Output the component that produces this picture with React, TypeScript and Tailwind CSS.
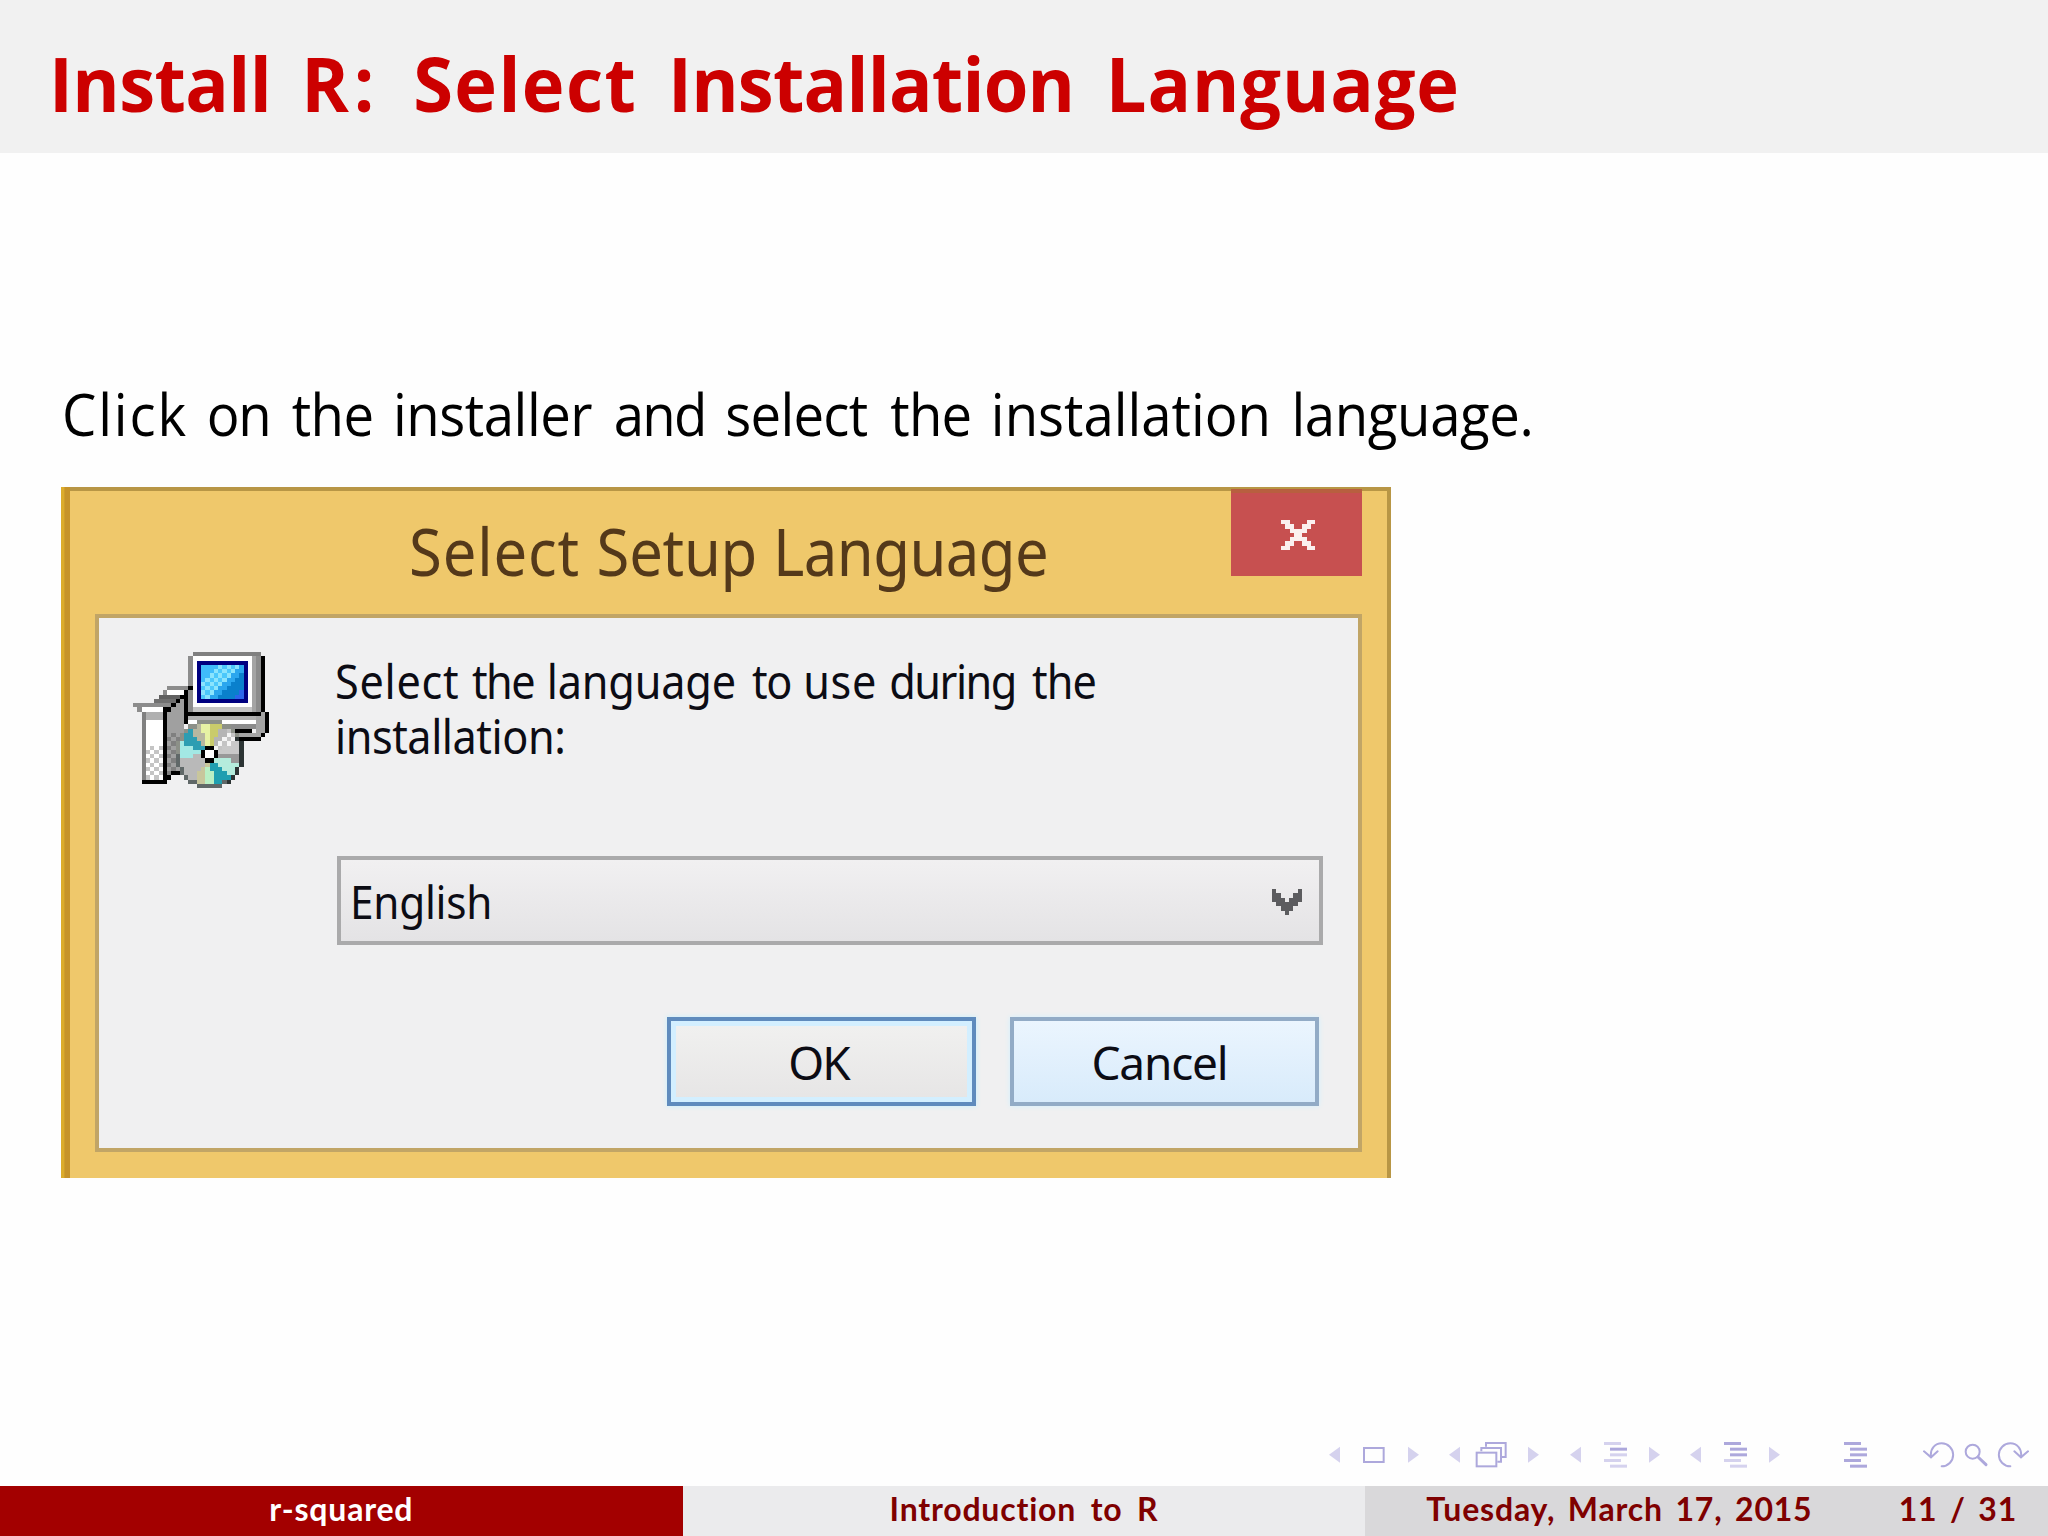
import type { ReactNode } from "react";

type Pixel = { x: number; y: number; w?: number; h?: number; fill: string };

const CD_CENTER = { x: 18, y: 24 };

// Colour of a disc cell, picked by the sector it falls in (clockwise from the top)
const discColor = (dx: number, dy: number) => {
  const angle = ((Math.atan2(dx, -dy) * 180) / Math.PI + 360) % 360;
  if (angle < 22) return "#c9cb6b";
  if (angle < 38) return "#b5b5b5";
  if (angle < 62) return (Math.floor(dx) + Math.floor(dy)) % 2 ? "#f4f4f4" : "#c4c4c4";
  if (angle < 88) return "#c8c8c8";
  if (angle < 108) return "#989898";
  if (angle < 140) return "#b4ecdc";
  if (angle < 172) return "#1f9fb0";
  if (angle < 190) return "#b9efc4";
  if (angle < 210) return "#c8c69c";
  if (angle < 262) return "#b9b9b9";
  if (angle < 292) return "#a3e8e4";
  if (angle < 322) return "#2d9db2";
  if (angle < 342) return "#b7b7a0";
  return "#e6f2a4";
};

const buildDisc = () => {
  const cells: Pixel[] = [];
  for (let y = 16; y < 32; y++) {
    for (let x = 10; x < 26; x++) {
      const dx = x + 0.5 - CD_CENTER.x;
      const dy = y + 0.5 - CD_CENTER.y;
      const dist = Math.hypot(dx, dy);
      if (dist > 8.05) continue;
      const onEdge = dist > 7.2;
      let fill = discColor(dx, dy);
      if (onEdge) fill = dx > 4 && dy > -4 ? "#2c3434" : dy > 0 ? "#606868" : "#8c9088";
      cells.push({ x, y, fill });
    }
  }
  return cells;
};

const buildScreen = () => {
  const cells: Pixel[] = [];
  for (let y = 0; y < 8; y++) {
    for (let x = 0; x < 10; x++) {
      const s = x + y;
      let fill = "#40bcfb";
      if (s > 8) fill = "#2ba6ee";
      if (s > 10) fill = "#0a80cc";
      if (s > 14) fill = "#2c66ea";
      // dithered highlight along the diagonal
      if (s > 3 && s < 9 && x % 2 === y % 2) fill = "#8be4fd";
      if (s > 3 && s < 9 && x % 2 !== y % 2) fill = "#4cc8fb";
      cells.push({ x: x + 16, y: y + 3, fill });
    }
  }
  return cells;
};

const buildBoxPattern = () => {
  const cells: Pixel[] = [];
  for (let y = 22; y < 30; y++) {
    for (let x = 3; x < 7; x++) {
      if ((x + y) % 2 === 0) cells.push({ x, y, fill: "#c4c4c4" });
    }
  }
  for (let y = 19; y < 28; y++) {
    for (let x = 8; x < 11; x++) {
      if ((x + y) % 2 === 0) cells.push({ x, y, fill: "#808080" });
    }
  }
  return cells;
};

const INSTALLER_PIXELS: Pixel[] = [
  // monitor
  { x: 14, y: 0, w: 16, fill: "#808080" },
  { x: 13, y: 1, h: 13, fill: "#8c8c8c" },
  { x: 14, y: 1, w: 14, h: 12, fill: "#ffffff" },
  { x: 28, y: 1, w: 2, h: 13, fill: "#a4a4a4" },
  { x: 29, y: 1, h: 13, fill: "#8c8c8c" },
  { x: 14, y: 13, w: 14, fill: "#c4c4c4" },
  { x: 30, y: 1, h: 13, fill: "#000000" },
  { x: 15, y: 2, w: 12, h: 10, fill: "#000080" },
  ...buildScreen(),
  // monitor foot
  { x: 13, y: 14, w: 17, fill: "#000000" },
  { x: 13, y: 15, w: 16, fill: "#b0b0b0" },
  { x: 13, y: 16, w: 17, fill: "#ffffff" },
  { x: 21, y: 17, w: 9, fill: "#8c8c8c" },
  { x: 29, y: 15, w: 2, h: 5, fill: "#a4a4a4" },
  { x: 30, y: 14, fill: "#a4a4a4" },
  { x: 31, y: 14, h: 5, fill: "#000000" },
  { x: 24, y: 19, w: 6, fill: "#a4a4a4" },
  { x: 23, y: 18, w: 5, fill: "#000000" },
  { x: 30, y: 19, fill: "#000000" },
  { x: 25, y: 20, w: 5, fill: "#000000" },
  // box lid
  { x: 8, y: 8, w: 5, fill: "#8c8c8c" },
  { x: 13, y: 8, fill: "#000000" },
  { x: 7, y: 9, fill: "#8c8c8c" },
  { x: 8, y: 9, w: 4, fill: "#ffffff" },
  { x: 6, y: 10, w: 5, fill: "#606060" },
  { x: 5, y: 11, w: 5, fill: "#707070" },
  { x: 0, y: 12, w: 9, fill: "#8c8c8c" },
  { x: 1, y: 13, w: 1, fill: "#8c8c8c" },
  { x: 2, y: 13, w: 5, fill: "#ffffff" },
  // box body
  { x: 8, y: 13, w: 4, h: 15, fill: "#a0a0a0" },
  { x: 9, y: 12, w: 3, fill: "#a0a0a0" },
  { x: 10, y: 11, w: 2, fill: "#a0a0a0" },
  { x: 2, y: 14, h: 16, fill: "#808080" },
  { x: 3, y: 14, w: 4, h: 2, fill: "#b0b0b0" },
  { x: 3, y: 16, w: 4, h: 14, fill: "#ffffff" },
  { x: 7, y: 13, h: 18, fill: "#000000" },
  { x: 8, y: 13, fill: "#000000" },
  { x: 9, y: 12, fill: "#000000" },
  { x: 10, y: 11, fill: "#000000" },
  { x: 11, y: 10, fill: "#000000" },
  { x: 12, y: 9, h: 8, fill: "#000000" },
  { x: 2, y: 30, w: 6, fill: "#000000" },
  { x: 8, y: 28, fill: "#808080" },
  { x: 8, y: 29, fill: "#000000" },
  { x: 9, y: 28, w: 2, fill: "#000000" },
  ...buildBoxPattern(),
  ...buildDisc(),
  // disc hub
  { x: 17, y: 22, w: 2, h: 4, fill: "#000000" },
  { x: 16, y: 23, w: 4, h: 2, fill: "#000000" },
  { x: 17, y: 23, w: 2, h: 2, fill: "#ffffff" },
];

const InstallerIcon = () => (
  <svg viewBox="0 0 32 32" shapeRendering="crispEdges" className="h-[136px] w-[136px] shrink-0">
    {INSTALLER_PIXELS.map(({ x, y, w = 1, h = 1, fill }, i) => (
      <rect key={i} x={x} y={y} width={w} height={h} fill={fill} />
    ))}
  </svg>
);

const CloseGlyph = () => (
  <svg
    viewBox="0 0 8 7"
    preserveAspectRatio="none"
    shapeRendering="crispEdges"
    className="h-[30px] w-[34px]"
    fill="#fbf1f0"
  >
    <path d="M0 0h2v1H0zM6 0h2v1H6zM1 1h2v1H1zM5 1h2v1H5zM2 2h4v1H2zM3 3h2v1H3zM2 4h4v1H2zM1 5h2v1H1zM5 5h2v1H5zM0 6h2v1H0zM6 6h2v1H6z" />
  </svg>
);

const ChevronGlyph = () => (
  <svg viewBox="0 0 7 6" shapeRendering="crispEdges" className="mt-0.5 h-[26px] w-[30px]" fill="#5c5c5f">
    <path d="M0 0h1v1h1v1h1v1h1v-1h1v-1h1v-1h1v3h-1v1h-1v1h-1v1h-1v-1h-1v-1h-1v-1h-1z" />
  </svg>
);

const SetupDialog = () => (
  <div className="flex h-[691px] w-[1330px] bg-[#efc86b]">
    <div className="w-[9px] shrink-0 bg-linear-to-r from-[#dcac2c] from-30% to-[#c6932a] to-45%" />
    <div className="flex flex-1 flex-col border-t-4 border-r-4 border-[#b89645] pr-[25px] pl-[25px]">
      <div className="flex h-[123px] items-start">
        <div className="-mt-[3px] flex-1 pl-[314px]">
          <div className="w-[700px] origin-left scale-x-92 text-[65px] leading-[127px] whitespace-pre text-[#54391a]">
            <span className="inline-block w-[203.9px] tracking-[0.9px]">{"Select "}</span>
            <span className="inline-block w-[191.8px] tracking-[-0.3px]">{"Setup "}</span>
            <span className="tracking-[-0.6px]">Language</span>
          </div>
        </div>
        <button className="-mt-0.5 flex h-[87px] w-[131px] shrink-0 items-center justify-center border-t-4 border-[#b85f3f] bg-[#c75050] pl-0.5">
          <CloseGlyph />
        </button>
      </div>

      <div className="flex h-[538px] border-4 border-[#c1a566] bg-[#f0f0f1] pt-[34px] pl-[34px]">
        <InstallerIcon />
        <div className="ml-[68px] flex w-[986px] shrink-0 flex-col">
          <div className="mt-[2px] -ml-[2px] origin-left scale-x-92 text-[47px] leading-[55px] whitespace-pre text-[#0c0c14]">
            <p>
              <span className="inline-block w-[148.9px] tracking-[0.8px]">{"Select "}</span>
              <span className="inline-block w-[81.2px] tracking-[-1.6px]">{"the "}</span>
              <span className="inline-block w-[223.2px] tracking-[-0.2px]">{"language "}</span>
              <span className="inline-block w-[55.8px] tracking-[-1.5px]">{"to "}</span>
              <span className="inline-block w-[93.3px] tracking-[0.6px]">{"use "}</span>
              <span className="inline-block w-[155.3px] tracking-[-1.6px]">{"during "}</span>
              <span className="tracking-[-1px]">the</span>
            </p>
            <p className="tracking-[-0.5px]">installation:</p>
          </div>
          <div className="mt-[92px] flex h-[89px] items-center justify-between border-4 border-[#aaaaab] bg-linear-to-b from-[#f1f0f1] to-[#e4e3e5] pr-[17px] pl-[9px]">
            <span className="mt-[2px] origin-left scale-x-92 text-[46px] tracking-[-0.3px] text-[#0c0c14]">
              English
            </span>
            <ChevronGlyph />
          </div>
          <div className="mt-[72px] flex justify-end gap-[34px] pr-[4px] text-[46px] text-[#0c0c14]">
            <button className="h-[89px] w-[309px] border-4 border-[#5f8bbd] bg-linear-to-b from-[#f1f1f0] to-[#e6e5e5] pt-[2px] pr-1.5 tracking-[-2px] shadow-[0_0_5px_#c4f0ff,inset_0_0_0_5px_#d3efff]">
              OK
            </button>
            <button className="h-[89px] w-[309px] border-4 border-[#92abc6] bg-linear-to-b from-[#ebf5fe] to-[#d8ebfb] pt-[2px] pr-2.5 tracking-[-1.2px] shadow-[0_0_5px_#d0f0ff]">
              Cancel
            </button>
          </div>
        </div>
      </div>
    </div>
  </div>
);

const STRONG = "#ada8dc";
const FAINT = "#d5d2ee";

// One group of the navigation bar: a symbol between two arrows
const NavGroup = ({ children, arrows = true }: { children: ReactNode; arrows?: boolean }) => (
  <svg viewBox="0 0 270 78" className="mr-[30.33px] h-[26px] w-[90px] shrink-0">
    {arrows && <path d="M33 14v48L0 38zM237 14v48l33-24z" fill={FAINT} />}
    {children}
  </svg>
);

const Lines = ({ strong }: { strong: boolean[] }) => (
  <g>
    {strong.map((isStrong, i) => (
      <rect
        key={i}
        x={i === 0 || i === 3 ? 102 : 120}
        y={i * 17}
        width="51"
        height="9"
        fill={isStrong ? STRONG : FAINT}
      />
    ))}
  </g>
);

const NavigationSymbols = () => (
  <div className="flex h-[26px] items-center pl-[1329px]">
    <NavGroup>
      <rect x="105" y="18" width="59" height="42" fill="none" stroke={STRONG} strokeWidth="6" />
    </NavGroup>
    <NavGroup>
      <g fill="none" stroke={STRONG} strokeWidth="6">
        <rect x="83" y="32" width="59" height="41" />
        <path d="M97 28V18h59v41h-11M111 14V3h59v42h-11" />
      </g>
    </NavGroup>
    <NavGroup>
      <Lines strong={[false, true, false, false, false]} />
    </NavGroup>
    <NavGroup>
      <Lines strong={[true, true, true, false, false]} />
    </NavGroup>
    <NavGroup arrows={false}>
      <Lines strong={[true, true, true, true, true]} />
    </NavGroup>
    <svg
      viewBox="0 0 318 78"
      className="-ml-[7.33px] h-[26px] w-[106px] shrink-0"
      fill="none"
      stroke={STRONG}
      strokeWidth="6"
      strokeLinecap="round"
    >
      <path d="M24 46C20 18 38 4 56 4a34 34 0 0 1 0 69M3 28l21 18 20-18" />
      <circle cx="149" cy="29" r="21" />
      <path d="M165 45l24 23" strokeWidth="9" />
      <path d="M294 46C298 18 280 4 262 4a34 34 0 0 0 0 69M315 28l-21 18-20-18" />
    </svg>
  </div>
);

const Footer = () => (
  <footer className="grid h-[50px] grid-cols-3 font-[Lato] text-[32px] leading-[46px] font-bold tracking-[0.8px] whitespace-pre text-[#7f0000]">
    <div className="bg-[#a30000] text-center text-white">r-squared</div>
    <div className="bg-[#ebebed] text-center [word-spacing:6px]">Introduction to R</div>
    <div className="flex justify-between bg-[#d9d8da] pr-[31px] pl-[61px] [word-spacing:4px]">
      <span>Tuesday, March 17, 2015</span>
      <span>11 / 31</span>
    </div>
  </footer>
);

const App = () => (
  <div className="flex h-[1536px] w-[2048px] flex-col overflow-hidden bg-[#fefefe] font-['Noto_Sans',sans-serif]">
    <header className="h-[153px] bg-[#f1f1f1] pl-[49px]">
      <h1 className="origin-left scale-x-95 font-['Open_Sans'] text-[76px] leading-[166px] font-bold whitespace-pre text-[#cc0000]">
        <span className="inline-block w-[265.5px] tracking-[-0.6px]">{"Install "}</span>
        <span className="inline-block w-[117.8px] tracking-[5px]">{"R: "}</span>
        <span className="inline-block w-[268.3px] tracking-[1.5px]">{"Select "}</span>
        <span className="inline-block w-[460.9px] tracking-[-0.8px]">{"Installation "}</span>
        <span className="tracking-[0.9px]">Language</span>
      </h1>
    </header>

    <main className="flex-1 pt-[220px] pl-[61px]">
      <p className="mb-[33px] ml-px origin-left scale-x-94 font-['Open_Sans'] text-[58px] leading-[81px] whitespace-pre text-black">
        <span className="inline-block w-[154px] tracking-[2px]">{"Click "}</span>
        <span className="inline-block w-[90.4px] tracking-[-1.4px]">{"on "}</span>
        <span className="inline-block w-[107.8px] tracking-[-0.6px]">{"the "}</span>
        <span className="inline-block w-[234.8px] tracking-[-0.5px]">{"installer "}</span>
        <span className="inline-block w-[118.7px] tracking-[-1.9px]">{"and "}</span>
        <span className="inline-block w-[175.4px] tracking-[-0.8px]">{"select "}</span>
        <span className="inline-block w-[107.1px] tracking-[-0.8px]">{"the "}</span>
        <span className="inline-block w-[319.8px]">{"installation "}</span>
        <span className="tracking-[-0.4px]">language.</span>
      </p>
      <SetupDialog />
    </main>

    <div className="h-[44px]">
      <NavigationSymbols />
    </div>
    <Footer />
  </div>
);

export default App;
